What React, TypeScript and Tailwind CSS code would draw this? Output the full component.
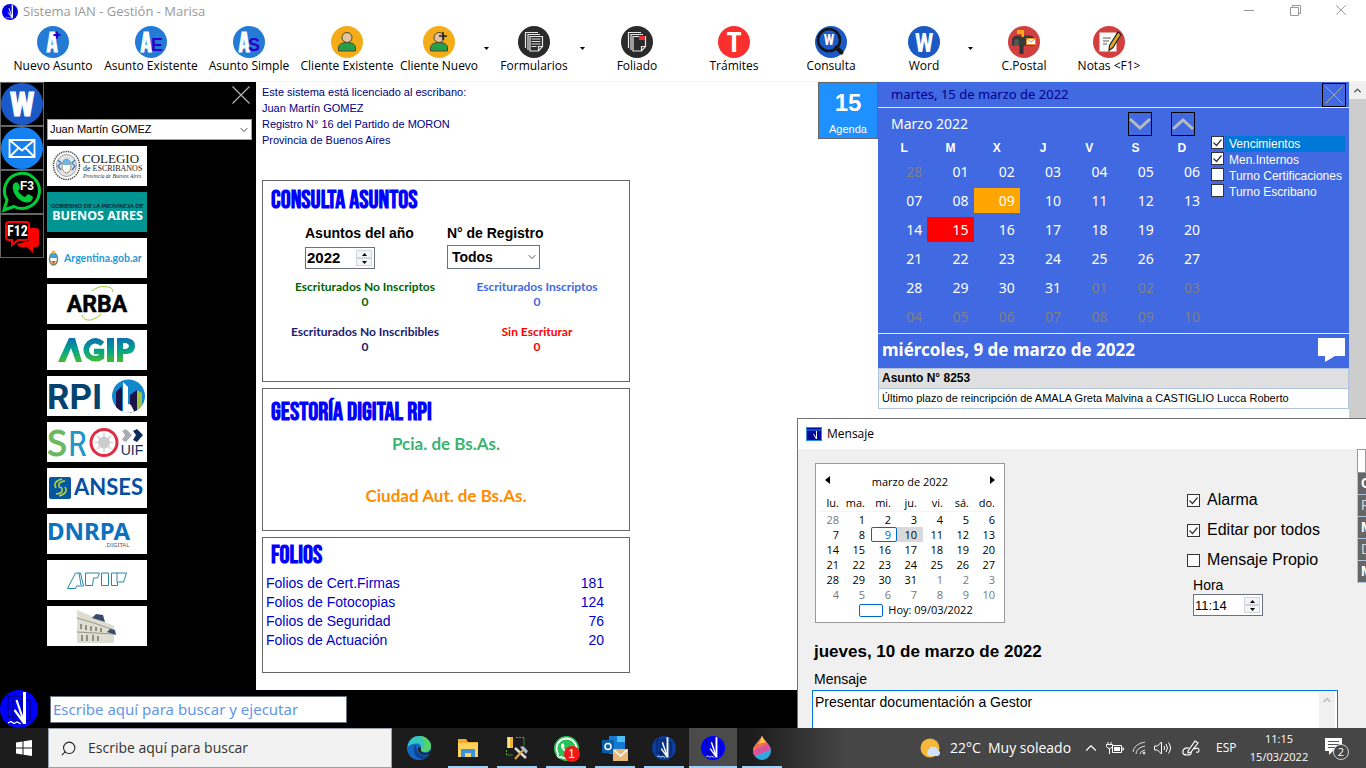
import type { ReactNode } from 'react';
import { ChevronDown, ChevronUp, Search, X } from 'lucide-react';
import { FaWhatsapp } from 'react-icons/fa';

const SEGOE = "font-['Open_Sans',sans-serif]";
const ARIAL = "font-['Liberation_Sans',Arial,sans-serif]";
const TAHOMA = "font-['Noto_Sans',Tahoma,sans-serif]";
const GOTHIC = "font-['Lato','Century_Gothic',sans-serif]";
const BEBAS = "font-['Bebas_Neue','Roboto_Condensed','Roboto',sans-serif]";

const condensed = "'Roboto Condensed','Open Sans Condensed','Roboto',sans-serif";
const bebas = "'Bebas Neue','Roboto Condensed','Roboto',sans-serif";
const sans = "'Liberation Sans',sans-serif";
const noto = "'Noto Sans',sans-serif";
const lato = 'Lato,sans-serif';

/* ---------- shared drawings ---------- */

function Disc({ color, children }: { color: string; children?: ReactNode }) {
  return (
    <svg width="32" height="32" viewBox="0 0 32 32" aria-hidden="true">
      <circle cx="16" cy="16" r="16" fill={color} />
      {children}
    </svg>
  );
}

function Letter({ x, y = 26, size = 28, fill = '#fff', font = bebas, children }: { x: number; y?: number; size?: number; fill?: string; font?: string; children: string }) {
  return (
    <text x={x} y={y} fontSize={size} fontWeight="700" fill={fill} textAnchor="middle" fontFamily={font}>
      {children}
    </text>
  );
}

function Person() {
  return (
    <g stroke="#4a4a33" strokeWidth="1">
      <path d="M7.500 25v-3c0-3.500 3-5.500 8.500-5.500s8.500 2 8.500 5.500v3z" fill="#24a148" />
      <circle cx="16" cy="11.500" r="5" fill="#e5c19c" />
    </g>
  );
}

function Sheets() {
  return (
    <g fill="none" stroke="#e8e8e8" strokeWidth="1.200">
      <path d="M7.500 22V6.500H20M10 24V8.500h12" />
      <path d="M12 10.500h12.500v10l-4 4.500H12z" fill="#2b2b2b" />
      <path d="M24.500 20.500h-4V25" />
    </g>
  );
}

function Boat({ size, color = '#00f' }: { size: number; color?: string }) {
  return (
    <svg width={size} height={size} viewBox="0 0 38 38" aria-hidden="true" className="shrink-0">
      <circle cx="19" cy="19" r="19" fill={color} />
      <path d="M8 6h14v21H8zM13 10h17v20H13z" fill="none" stroke="#000" strokeOpacity=".6" strokeWidth="1.200" />
      <path d="M24.500 2v32" stroke="#fff" strokeWidth="3" />
      <path d="M16.500 10l7.500 22M14.500 20l9.500 13" stroke="#fff" strokeWidth="2.200" />
      <path d="M8 33l3-1.500 3 2 3-1.500 4 2" fill="none" stroke="#fff" strokeWidth="1.300" />
    </svg>
  );
}

function BadgeW({ size }: { size: number }) {
  return (
    <svg width={size} height={size} viewBox="0 0 42 42" aria-hidden="true">
      <circle cx="21" cy="21" r="21" fill="#1b5ac6" />
      <text x="21" y="33" fontSize="33" fontWeight="700" fill="#fff" stroke="#fff" textAnchor="middle" fontFamily={condensed}>
        W
      </text>
    </svg>
  );
}

/* ---------- toolbar ---------- */

const tools: { label: string; width: string; icon: ReactNode; menu?: boolean }[] = [
  { label: 'Nuevo Asunto', width: 'w-[98px]', icon: <Disc color="#247bd6"><Letter x={15}>A</Letter><path d="M20 5.500v7M16.500 9h7" stroke="#2b00c8" strokeWidth="2" /></Disc> },
  { label: 'Asunto Existente', width: 'w-[98px]', icon: <Disc color="#247bd6"><Letter x={11}>A</Letter><Letter x={22} y={25} size={18} font={sans} fill="#2b00c8">E</Letter></Disc> },
  { label: 'Asunto Simple', width: 'w-[98px]', icon: <Disc color="#247bd6"><Letter x={11}>A</Letter><Letter x={21} y={25} size={18} font={sans} fill="#2b00c8">S</Letter></Disc> },
  { label: 'Cliente Existente', width: 'w-[98px]', icon: <Disc color="#f4ad18"><Person /></Disc> },
  { label: 'Cliente Nuevo', width: 'w-[86px]', menu: true, icon: <Disc color="#f4ad18"><Person /><path d="M20 6v8M16 10h8" stroke="#222" strokeWidth="1.600" /></Disc> },
  { label: 'Formularios', width: 'w-[88px]', menu: true, icon: <Disc color="#2b2b2b"><Sheets /><path d="M13.500 13h9M13.500 15.500h9M13.500 18h9M13.500 20.500h5" stroke="#ddd" strokeWidth="1" /></Disc> },
  { label: 'Foliado', width: 'w-[102px]', icon: <Disc color="#2b2b2b"><Sheets /><path d="M18 10h6v4h-6z" fill="#f03030" /></Disc> },
  { label: 'Trámites', width: 'w-[92px]', icon: <Disc color="#fc2f2f"><Letter x={16} font={condensed}>T</Letter></Disc> },
  {
    label: 'Consulta',
    width: 'w-[102px]',
    icon: (
      <Disc color="#1b5ac6">
        <Letter x={14} y={19} size={14} font={condensed}>W</Letter>
        <circle cx="14" cy="14" r="11" fill="none" stroke="#161616" strokeWidth="2.600" />
        <path d="M21.500 21.500l5 5" stroke="#161616" strokeWidth="4" strokeLinecap="round" />
      </Disc>
    ),
  },
  { label: 'Word', width: 'w-[84px]', menu: true, icon: <Disc color="#1b5ac6"><Letter x={16} size={25} font={condensed}>W</Letter></Disc> },
  {
    label: 'C.Postal',
    width: 'w-[100px]',
    icon: (
      <Disc color="#d23f3f">
        <path d="M11.500 18h4v10h-4z" fill="#333" />
        <path d="M4 20v-5q0-5.500 6-5.500h11q5 0 6 5v5H4z" fill="#3a3a3a" />
        <path d="M6 20v-4q0-3 2.500-3t2.500 3v4z" fill="#555" />
        <path d="M9 4h7v7h-2.500V8H9z" fill="#f9a81a" />
        <path d="M18.500 12.500h9v6h-9z" fill="#fff" stroke="#f58a1f" />
        <path d="M19 13l4 3 4-3" fill="none" stroke="#f58a1f" />
      </Disc>
    ),
  },
  {
    label: 'Notas <F1>',
    width: 'w-[70px]',
    icon: (
      <Disc color="#d23f3f">
        <path d="M6.500 6.500h17v19h-17z" fill="#fff" />
        <path d="M10 12h8M10 15h6M10 18h4" stroke="#555" />
        <path d="M25 6l3 2.500-8 13-4 3 .5-5z" fill="#e0a820" stroke="#222" strokeWidth="1.200" />
      </Disc>
    ),
  },
];

function Toolbar() {
  return (
    <nav className="flex h-[58px] shrink-0 border-b border-gray-100 bg-white pl-1" aria-label="Herramientas">
      {tools.map((t) => (
        <div key={t.label} className="flex">
          <button className={`${t.width} flex flex-col items-center pt-0.5 text-xs leading-4 whitespace-nowrap text-black ${SEGOE}`}>
            {t.icon}
            {t.label}
          </button>
          {t.menu && (
            <button className="flex w-2 items-center justify-center" aria-label={`Más opciones de ${t.label}`}>
              <svg width="5" height="3" viewBox="0 0 5 3" className="mb-2"><path d="M0 0h5L2.500 3z" /></svg>
            </button>
          )}
        </div>
      ))}
    </nav>
  );
}

function TitleBar() {
  return (
    <header className="flex h-6 shrink-0 items-center bg-white pr-0.5 pl-0.5">
      <Boat size={16} />
      <h1 className={`ml-[5px] flex-1 text-[13px] text-[#999] ${SEGOE}`}>Sistema IAN - Gestión - Marisa</h1>
      <div className="flex pb-1">
        <button className="flex h-5 w-[46px] items-center justify-center" aria-label="Minimizar">
          <svg width="10" height="10" fill="none" stroke="#999"><path d="M0 5.500h10" /></svg>
        </button>
        <button className="flex h-5 w-[46px] items-center justify-center" aria-label="Restaurar">
          <svg width="11" height="11" fill="none" stroke="#999"><path d="M.5 2.500h8v8h-8zM2.500 2.500v-2h8v8h-2" /></svg>
        </button>
        <button className="flex h-5 w-[46px] items-center justify-center" aria-label="Cerrar">
          <X size={18} color="#999" strokeWidth={1.25} />
        </button>
      </div>
    </header>
  );
}

/* ---------- left side ---------- */

function Shortcuts() {
  const cell = 'flex h-11 w-11 items-center justify-center border border-[#666] bg-black';
  return (
    <div className="flex w-11 shrink-0 flex-col">
      <button className={cell} aria-label="Word"><BadgeW size={42} /></button>
      <button className={cell} aria-label="Correo">
        <svg width="42" height="42" viewBox="0 0 42 42">
          <circle cx="21" cy="21" r="21" fill="#1581f0" />
          <path d="M8.500 13h25v17h-25zM8.500 13L21 23.500 33.500 13M8.500 30l9-9M33.500 30l-9-9" fill="none" stroke="#fff" strokeWidth="1.800" />
        </svg>
      </button>
      <button className={cell} aria-label="WhatsApp F3">
        <svg width="42" height="42" viewBox="0 0 42 42">
          <path d="M3 39l3-10A17.500 17.500 0 1 1 13 35.500z" fill="none" stroke="#00cc38" strokeWidth="3" />
          <path d="M12 14c2-4 5-3 6 0l1 3-2 3c2 3 4 5 7 6l3-3 4 2c2 1 0 5-2 6-9 3-19-9-17-17z" fill="#00cc38" />
          <path d="M19 8h14v12H19z" fill="#000" />
          <text x="26" y="19" fontSize="12" fontWeight="700" fill="#fff" textAnchor="middle" fontFamily={sans}>F3</text>
        </svg>
      </button>
      <button className={cell} aria-label="Mensajes F12">
        <svg width="42" height="42" viewBox="0 0 42 42">
          <path d="M29 13h6q3 0 3 3v13q0 3-3 3h-3v6l-6-6H19q-2 0-3-3l8-2q5 0 5-5z" fill="#f00" />
          <path d="M7 7h18q3 0 3 3v12q0 3-3 3H17l-6 5v-5H8q-3 0-3-3V10q0-3 3-3z" fill="#000" stroke="#f00" strokeWidth="2" />
          <text x="16.500" y="21" fontSize="14" fontWeight="700" fill="#fff" textAnchor="middle" fontFamily={condensed}>F12</text>
        </svg>
      </button>
    </div>
  );
}

const sites: { name: string; art: ReactNode }[] = [
  {
    name: 'Colegio de Escribanos',
    art: (
      <>
        <ellipse cx="19.500" cy="19.500" rx="13" ry="14" fill="#fff" stroke="#555" strokeWidth="1.500" strokeDasharray="1.500 .8" />
        <ellipse cx="19.500" cy="19.500" rx="10" ry="11" fill="#dfe6ee" stroke="#777" strokeWidth=".7" />
        <ellipse cx="19.500" cy="20" rx="4.500" ry="7" fill="#fff" stroke="#a58b4d" />
        <path d="M15.500 19h8v-4q-4-4-8 0z" fill="#6fb3e0" />
        <path d="M11 14l3 3-3 3 3 4M28 14l-3 3 3 3-3 4" fill="none" stroke="#4b7fb5" strokeWidth="1.500" />
        <text x="35" y="17" fontSize="13" fill="#222" fontFamily="'Liberation Serif',serif">COLEGIO</text>
        <text x="36" y="25" fontSize="8" fill="#222" fontFamily="'Liberation Serif',serif">de ESCRIBANOS</text>
        <text x="36" y="32" fontSize="5.500" fill="#333" fontStyle="italic" fontFamily="'Liberation Serif',serif">Provincia de Buenos Aires</text>
      </>
    ),
  },
  {
    name: 'Provincia de Buenos Aires',
    art: (
      <>
        <rect width="100" height="40" fill="#009493" />
        <text x="50" y="15.500" fontSize="6" fill="#0c2a35" stroke="#0c2a35" strokeWidth=".2" textAnchor="middle" fontFamily={lato}>GOBIERNO DE LA PROVINCIA DE</text>
        <text x="50.500" y="28" fontSize="12.500" fontWeight="700" fill="#fff" textAnchor="middle" fontFamily={noto}>BUENOS AIRES</text>
      </>
    ),
  },
  {
    name: 'Argentina.gob.ar',
    art: (
      <>
        <ellipse cx="6.500" cy="21" rx="4" ry="6" fill="#fff" stroke="#7c8a55" strokeWidth="1.500" />
        <path d="M3 20q0-5 3.500-5t3.500 5z" fill="#3fa0dc" />
        <circle cx="6.500" cy="14" r="1.800" fill="#f0b93a" />
        <path d="M4 23h5l-2.500 4z" fill="#c56a4a" />
        <text x="17" y="24" fontSize="10.500" fontWeight="700" fill="#1f9bd7" fontFamily={lato}>Argentina.gob.ar</text>
      </>
    ),
  },
  {
    name: 'ARBA',
    art: (
      <>
        <text x="50" y="28" fontSize="23" fontWeight="700" stroke="#000" strokeWidth=".5" textAnchor="middle" fontFamily="Roboto,sans-serif">ARBA</text>
        <path d="M45 7q7-6 16-4 5 1 5 5M35 31q2 6 9 5 7-2 10-6" fill="none" stroke="#a4c93a" strokeWidth="1" />
      </>
    ),
  },
  {
    name: 'AGIP',
    art: (
      <>
        <defs>
          <linearGradient id="agip" gradientUnits="userSpaceOnUse" x1="0" y1="8" x2="0" y2="32">
            <stop offset="0" stopColor="#0b6fb0" />
            <stop offset=".5" stopColor="#00a38c" />
            <stop offset="1" stopColor="#45bb2f" />
          </linearGradient>
        </defs>
        <path d="M11 32L22 8h6l7 24h-6l-5-14-6 14z" fill="url(#agip)" />
        <path d="M55.500 14q-7-6-13-1-6 6-1 13 6 5 13 1v-5.500H47" fill="none" stroke="url(#agip)" strokeWidth="5.500" />
        <path d="M60 8h7v24h-7zM70 8h10q8 1 8 8t-8 8h-4v8h-6zm6 5v6h3q3-1 3-3t-3-3z" fill="url(#agip)" fillRule="evenodd" />
      </>
    ),
  },
  {
    name: 'RPI',
    art: (
      <>
        <text x="0" y="33" fontSize="35" fontWeight="700" fill="#04426f" fontFamily="Roboto,sans-serif">RPI</text>
        <defs><clipPath id="rpi"><circle cx="81.500" cy="20" r="16.500" /></clipPath></defs>
        <g clipPath="url(#rpi)">
          <rect x="65" y="3" width="34" height="34" fill="#1187cf" />
          <path d="M69 16l6-6v28h-6z" fill="#1c1448" />
          <path d="M76 6l5 5v26h-5z" fill="#fff" />
          <path d="M83 19l7-5v23h-7z" fill="#1c1448" />
          <path d="M90 14l5 3v19h-5z" fill="#9bc53b" />
          <path d="M75 37q3-12 9-8l4 8z" fill="#fff" />
        </g>
      </>
    ),
  },
  {
    name: 'SRO UIF',
    art: (
      <>
        <text x="0" y="34" fontSize="37" fill="#6db75f" stroke="#6db75f" fontFamily={lato}>S</text>
        <text x="21" y="34" fontSize="35" fill="#2097c9" fontFamily={condensed}>R</text>
        <circle cx="57" cy="20.500" r="13" fill="none" stroke="#e02c43" strokeWidth="3" />
        <circle cx="57" cy="20.500" r="6" fill="#ccc" />
        <path d="M57 11v19M47.500 20.500h19M50 14l14 13M64 14L50 27" stroke="#ccc" strokeWidth="1.200" />
        <path d="M75 9l4-2 6 6-6 7-4-2 3-5z" fill="#a9adb1" />
        <path d="M86 9l4-2 6 6-6 7-4-2 3-5z" fill="#0d2d5c" />
        <text x="85" y="33" fontSize="14" fill="#0d2d5c" textAnchor="middle" fontFamily={sans}>UIF</text>
      </>
    ),
  },
  {
    name: 'ANSES',
    art: (
      <>
        <rect x="2" y="9" width="22" height="22" rx="2" fill="#0557a0" />
        <path d="M15 11q-10 3-6 9M18 13q-9 1-5 7M12 28q10-3 6-9M9 26q9-1 5-7" fill="none" stroke="#b5d334" strokeWidth="1.500" />
        <text x="27" y="27" fontSize="22" fontWeight="700" fill="#0550a0" fontFamily={lato}>ANSES</text>
      </>
    ),
  },
  {
    name: 'DNRPA Digital',
    art: (
      <>
        <text x="0" y="26" fontSize="24" fontWeight="700" fill="#0a73bf" fontFamily={noto}>DNRPA</text>
        <text x="58" y="33" fontSize="6" fill="#555" fontFamily={noto}>.DIGITAL</text>
      </>
    ),
  },
  {
    name: 'AFIP',
    art: (
      <g fill="none" stroke="#2b86ad" strokeWidth="1">
        <path d="M20.500 28.500l8-15.500h5l3 13h-7l-1 2.500zM32 13l2 12" />
        <path d="M38.500 25.500V13h14l-2 5h-4l-1 7.500zM54.500 13h7v12.500h-7zM64.500 25.500V13h15l-3 9h-6v3.500zM70 13v9" />
      </g>
    ),
  },
  {
    name: 'Registro',
    art: (
      <>
        <path d="M30 4l17 7 20 9v17H30z" fill="#deded0" />
        <path d="M30 12l17 5 20 7M30 26l37 2" stroke="#99998a" fill="none" />
        <path d="M45 12l4-4 7 1 2 7zM60 26l3-3 5 1 1 5z" fill="#3b4b70" />
        <path d="M34 18v5M39 19v5M44 20v5M49 21v4M54 22v4M35 29v6M40 29v6M46 29v6M51 30v5" stroke="#75756a" strokeWidth="1.500" />
      </>
    ),
  },
];

function Sidebar() {
  return (
    <aside className={`flex w-[212px] shrink-0 flex-col bg-black pt-1 pr-1 pl-[3px] ${ARIAL}`}>
      <button className="h-[18px] self-end pr-0.5" aria-label="Cerrar panel">
        <svg width="18" height="18" stroke="#b5b5b5" strokeWidth="1.200"><path d="M.5 .5l17 17M17.500 .5l-17 17" /></svg>
      </button>
      <div className="relative mt-[15px] h-[21px]">
        <select className="block h-[21px] w-full appearance-none border border-gray-400 bg-white pl-0.5 text-[11px] text-black" aria-label="Escribano">
          <option>Juan Martín GOMEZ</option>
        </select>
        <ChevronDown size={12} color="#444" strokeWidth={2} className="pointer-events-none absolute top-[5px] right-0.5" />
      </div>
      <ul className="mt-1.5 flex flex-col gap-1.5">
        {sites.map((s) => (
          <li key={s.name} className="h-10">
            <a href="#" aria-label={s.name} className="block h-10 w-[100px] bg-white">
              <svg width="100" height="40" viewBox="0 0 100 40" className="overflow-visible">{s.art}</svg>
            </a>
          </li>
        ))}
      </ul>
    </aside>
  );
}

/* ---------- panels ---------- */

function Spinner({ id, value, bold }: { id: string; value: string; bold?: boolean }) {
  const step = 'flex h-2 w-4 items-center justify-center border border-gray-300 bg-gray-100';
  return (
    <div className="flex h-[22px] w-[70px] items-center justify-between border border-gray-500 bg-white pr-0.5">
      <input id={id} defaultValue={value} className={`h-5 w-12 pl-px text-black outline-none ${bold ? 'text-[15px] font-bold' : 'text-[13px]'}`} />
      <div className="flex flex-col">
        <button className={step} aria-label="Aumentar"><svg width="5" height="3"><path d="M0 3h5L2.500 0z" /></svg></button>
        <button className={step} aria-label="Disminuir"><svg width="5" height="3"><path d="M0 0h5L2.500 3z" /></svg></button>
      </div>
    </div>
  );
}

function Heading({ children }: { children: string }) {
  return <h2 className={`text-[25px] leading-6 font-bold text-[#00f] ${BEBAS}`}>{children}</h2>;
}

const stats = [
  { label: 'Escriturados No Inscriptos', color: 'text-[#006400]' },
  { label: 'Escriturados Inscriptos', color: 'text-[#4169e1]' },
  { label: 'Escriturados No Inscribibles', color: 'text-[#191970]' },
  { label: 'Sin Escriturar', color: 'text-[#f00]' },
];

const folios = [
  ['Folios de Cert.Firmas', 181],
  ['Folios de Fotocopias', 124],
  ['Folios de Seguridad', 76],
  ['Folios de Actuación', 20],
];

function Panels() {
  const box = 'w-[368px] border border-[#666] bg-white';
  return (
    <section className={`flex flex-1 flex-col gap-1.5 pt-0.5 pl-1.5 ${ARIAL}`}>
      <p className="mb-[26px] text-[11px] leading-4 text-[#000080]">
        Este sistema está licenciado al escribano:<br />
        Juan Martín GOMEZ<br />
        Registro N° 16 del Partido de MORON<br />
        Provincia de Buenos Aires
      </p>

      <div className={`${box} h-[202px] pt-2`}>
        <div className="pl-2"><Heading>CONSULTA ASUNTOS</Heading></div>
        <div className="mt-2.5 flex gap-[33px] pl-[42px] text-sm leading-5 font-bold text-black">
          <div>
            <label htmlFor="anio">Asuntos del año</label>
            <div className="mt-1"><Spinner id="anio" value="2022" bold /></div>
          </div>
          <div>
            <label htmlFor="registro">N° de Registro</label>
            <div className="relative mt-0.5 w-[93px]">
              <select id="registro" className="h-6 w-full appearance-none border border-gray-500 bg-white pl-1 leading-5">
                <option>Todos</option>
              </select>
              <ChevronDown size={12} color="#555" className="pointer-events-none absolute top-1.5 right-0.5" />
            </div>
          </div>
        </div>
        <dl className={`mt-2.5 ml-4 grid w-[344px] grid-cols-2 gap-y-[15px] text-center text-xs leading-[15px] font-bold ${GOTHIC}`}>
          {stats.map((s) => (
            <div key={s.label} className={s.color}>
              <dt>{s.label}</dt>
              <dd>0</dd>
            </div>
          ))}
        </dl>
      </div>

      <div className={`${box} h-[143px] pt-3`}>
        <div className="pl-2"><Heading>GESTORÍA DIGITAL RPI</Heading></div>
        <div className={`mt-[9px] flex flex-col items-center gap-8 text-[17px] leading-5 font-bold ${GOTHIC}`}>
          <a href="#" className="text-[#3cb371]">Pcia. de Bs.As.</a>
          <a href="#" className="text-[#ff8c00]">Ciudad Aut. de Bs.As.</a>
        </div>
      </div>

      <div className={`${box} h-[136px] pt-1.5`}>
        <div className="pl-2"><Heading>FOLIOS</Heading></div>
        <table className="mt-1.5 w-[341px] text-sm leading-[19px] text-[#0000cd]">
          <tbody>
            {folios.map(([name, count]) => (
              <tr key={name}>
                <td className="pl-[3px]">{name}</td>
                <td className="text-right">{count}</td>
              </tr>
            ))}
          </tbody>
        </table>
      </div>
    </section>
  );
}

function Tick({ id, checked }: { id: string; checked?: boolean }) {
  return (
    <span className="grid size-[13px] shrink-0">
      <input id={id} type="checkbox" defaultChecked={checked} className="peer col-start-1 row-start-1 size-[13px] appearance-none border border-[#333] bg-white" />
      <svg viewBox="0 0 13 13" className="pointer-events-none invisible col-start-1 row-start-1 peer-checked:visible">
        <path d="M2.500 6.500l3 3 5-6" fill="none" stroke="#333" strokeWidth="1.200" />
      </svg>
    </span>
  );
}

/* ---------- agenda ---------- */

const days = [28, ...Array.from({ length: 31 }, (_, i) => i + 1), ...Array.from({ length: 10 }, (_, i) => i + 1)];
const isOther = (i: number) => i === 0 || i > 31;
const weeks = Array.from({ length: 6 }, (_, w) => days.slice(w * 7, w * 7 + 7));

function dayStyle(i: number) {
  if (i === 9) return 'bg-[#ffa500] text-white';
  if (i === 15) return 'bg-[#f00] text-white';
  return isOther(i) ? 'text-[#808080]' : 'text-white';
}

const filters = [
  { label: 'Vencimientos', checked: true },
  { label: 'Men.Internos', checked: true },
  { label: 'Turno Certificaciones' },
  { label: 'Turno Escribano' },
];

function Agenda() {
  return (
    <section className="flex items-start">
      <button className={`flex h-[57px] w-[60px] flex-col items-center border border-[#666] bg-[#1e90ff] pt-1.5 text-white ${ARIAL}`}>
        <span className="text-2xl leading-7 font-bold">15</span>
        <span className="pt-0.5 text-[11px] leading-5">Agenda</span>
      </button>
      <div className="w-[471px] bg-[#4169e1]">
        <div className="flex h-[26px] items-center justify-between border-b border-blue-100 pr-[3px] pl-[13px]">
          <span className={`text-[13px] text-[#00008b] ${TAHOMA}`}>martes, 15 de marzo de 2022</span>
          <button className="flex size-6 items-center justify-center border border-black" aria-label="Cerrar agenda">
            <svg width="18" height="18" stroke="#aaa"><path d="M.5 .5l17 17M17.500 .5l-17 17" /></svg>
          </button>
        </div>
        <div className="flex h-[225px]">
          <div className="ml-[3px] w-[324px] shrink-0 pt-1">
            <div className={`flex h-6 items-center pr-2.5 pl-2.5 text-sm text-white ${TAHOMA}`}>
              <span className="flex-1">Marzo 2022</span>
              <button className="flex size-6 items-center justify-center border border-black" aria-label="Mes siguiente">
                <svg width="22" height="14" viewBox="0 0 22 14" fill="none" stroke="#bbb" strokeWidth="3"><path d="M1 2l10 9 10-9" /></svg>
              </button>
              <button className="ml-[19px] flex size-6 items-center justify-center border border-black" aria-label="Mes anterior">
                <svg width="22" height="14" viewBox="0 0 22 14" fill="none" stroke="#bbb" strokeWidth="3"><path d="M1 12l10-9 10 9" /></svg>
              </button>
            </div>
            <table className="w-full table-fixed border-collapse text-white">
              <thead>
                <tr className={`h-[21px] text-xs font-bold ${ARIAL}`}>
                  {['L', 'M', 'X', 'J', 'V', 'S', 'D'].map((d) => <th key={d} scope="col" className="p-0 pt-0.5">{d}</th>)}
                </tr>
              </thead>
              <tbody className={`text-sm ${TAHOMA}`}>
                {weeks.map((week, w) => (
                  <tr key={w} className="h-[29px]">
                    {week.map((d, c) => (
                      <td key={c} className="p-0">
                        <div className={`h-[25px] pr-[5px] text-right leading-[25px] ${dayStyle(w * 7 + c)}`}>{String(d).padStart(2, '0')}</div>
                      </td>
                    ))}
                  </tr>
                ))}
              </tbody>
            </table>
          </div>
          <div className={`mr-1 ml-1.5 flex flex-1 flex-col pt-7 text-xs leading-[17px] text-white ${ARIAL}`}>
            {filters.map((f, i) => (
              <div key={f.label} className="flex h-4 gap-px">
                <Tick id={`filtro-${i}`} checked={f.checked} />
                <label htmlFor={`filtro-${i}`} className={`flex-1 pl-1 whitespace-nowrap ${i === 0 ? 'bg-[#0078d7]' : ''}`}>{f.label}</label>
              </div>
            ))}
          </div>
        </div>
        <div className="flex h-[35px] items-center justify-between border-t border-blue-100 pr-1 pb-0.5 pl-1">
          <h2 className={`text-[17px] font-bold text-white ${TAHOMA}`}>miércoles, 9 de marzo de 2022</h2>
          <button aria-label="Mensajes">
            <svg width="27" height="24" fill="#fff"><path d="M0 0h27v18H17L7 24v-6H0z" /></svg>
          </button>
        </div>
        <div className={`border border-[#b0c4de] text-xs leading-[19px] whitespace-nowrap text-black ${ARIAL}`}>
          <h3 className="border-b border-[#b0c4de] bg-[#e0e0e0] pl-[3px] font-bold">Asunto N° 8253</h3>
          <p className="bg-white pl-[3px] text-[11px] leading-[19px]">Último plazo de reincripción de AMALA Greta Malvina a CASTIGLIO Lucca Roberto</p>
        </div>
      </div>
    </section>
  );
}

/* ---------- message window ---------- */

function MonthPicker() {
  return (
    <div className={`h-40 w-[190px] border border-[#999] bg-white px-[3px] pt-2 text-[11px] text-black ${SEGOE}`}>
      <div className="flex h-5 items-center justify-between px-1.5">
        <button className="pb-1" aria-label="Mes anterior"><svg width="5" height="8"><path d="M5 0v8L0 4z" /></svg></button>
        <span>marzo de 2022</span>
        <button className="pb-1" aria-label="Mes siguiente"><svg width="5" height="8"><path d="M0 0v8l5-4z" /></svg></button>
      </div>
      <table className="mt-[3px] w-full table-fixed border-collapse text-right leading-[15px]">
        <thead>
          <tr className="h-4">
            {['lu.', 'ma.', 'mi.', 'ju.', 'vi.', 'sá.', 'do.'].map((d) => <th key={d} scope="col" className="p-0 pr-1.5 font-normal">{d}</th>)}
          </tr>
        </thead>
        <tbody className="border-t border-gray-100">
          {weeks.map((week, w) => (
            <tr key={w} className="h-[15px]">
              {week.map((d, c) => {
                const i = w * 7 + c;
                return (
                  <td key={c} className="p-0">
                    <div className={`h-[15px] pr-1.5 ${i === 9 ? 'rounded-xs text-[#0066cc] ring-1 ring-[#0066cc] ring-inset' : i === 10 ? 'bg-[#d9d9d9]' : isOther(i) ? 'text-[#777]' : ''}`}>{d}</div>
                  </td>
                );
              })}
            </tr>
          ))}
        </tbody>
      </table>
      <div className="flex h-[18px] items-center justify-center gap-[5px] pl-3">
        <span className="h-[13px] w-6 rounded-xs border border-[#0066cc]" />
        Hoy: 09/03/2022
      </div>
    </div>
  );
}

const options = [
  { label: 'Alarma', checked: true },
  { label: 'Editar por todos', checked: true },
  { label: 'Mensaje Propio' },
];

const recipients = ['C', 'P', 'M', 'D', 'M'];

function MessageWindow() {
  return (
    <section className={`absolute right-0 bottom-10 flex h-[310px] w-[569px] flex-col overflow-hidden border-t border-l border-[#707070] bg-[#f0f0f0] text-black ${ARIAL}`} aria-label="Mensaje">
      <div className="flex h-[30px] shrink-0 items-center gap-[5px] bg-white pl-2">
        <svg width="16" height="14">
          <rect width="16" height="14" fill="#000a9c" stroke="#2b8be0" strokeWidth="2" />
          <path d="M0 3h16" stroke="#2b8be0" />
          <path d="M10.500 4v8M7.500 7l3 5" stroke="#fff" />
        </svg>
        <span className={`text-xs ${SEGOE}`}>Mensaje</span>
      </div>
      <div className="flex h-[241px] shrink-0 justify-between">
        <div className="flex flex-1 justify-between pl-4">
          <div className="pt-3.5">
            <div className="pl-px"><MonthPicker /></div>
            <p className="mt-[18px] text-[17px] leading-[22px] font-bold">jueves, 10 de marzo de 2022</p>
            <label htmlFor="mensaje" className="mt-1.5 block h-5 text-sm leading-5">Mensaje</label>
          </div>
          <div className="mr-[37px] flex flex-col pt-9">
            {options.map((o, i) => (
              <div key={o.label} className="flex h-[30px] items-center gap-[7px]">
                <Tick id={`opcion-${i}`} checked={o.checked} />
                <label htmlFor={`opcion-${i}`} className="text-base">{o.label}</label>
              </div>
            ))}
            <label htmlFor="hora" className="ml-1.5 pt-0.5 text-sm leading-[17px]">Hora</label>
            <div className="ml-1.5"><Spinner id="hora" value="11:14" /></div>
          </div>
        </div>
        <ul className="w-[9px] overflow-hidden text-sm leading-[21px] text-white">
          <li className="h-6 border border-[#999] bg-white" />
          {recipients.map((r, i) => (
            <li key={i} className={`h-[22px] overflow-hidden border-b border-l border-[#b0c4de] bg-[#666] pl-[3px] ${i % 2 ? 'text-gray-300' : 'font-bold'}`}>{r}</li>
          ))}
        </ul>
      </div>
      <div className="mr-7 ml-3.5 flex h-[60px] shrink-0 border border-[#0078d7] bg-white p-0.5 pt-px">
        <textarea id="mensaje" defaultValue="Presentar documentación a Gestor" className="flex-1 resize-none text-sm leading-5 outline-none" />
        <span className="flex w-4 justify-center bg-[#f0f0f0] pt-0.5"><ChevronUp size={12} color="#bbb" strokeWidth={3} /></span>
      </div>
    </section>
  );
}

/* ---------- task bar ---------- */

const apps: { name: string; icon: ReactNode; active?: boolean; idle?: boolean }[] = [
  {
    name: 'Edge',
    idle: true,
    icon: (
      <svg width="24" height="24" viewBox="0 0 24 24">
        <circle cx="12" cy="12" r="12" fill="#1468c4" />
        <path d="M.5 11C2 3 7 0 12 0c7 0 12 5 12 10 0 4-3 6-6 6-4 0-5-2-4-4 1-4-6-7-13.500-1z" fill="#36c6c0" />
        <path d="M12 0c7 0 12 5 12 10 0 4-3 6-6 6-3 0-4-1-4-3 4 0 6-8-2-13z" fill="#53d36a" />
        <path d="M9 9c-4 3-3 12 5 14 4 0 7-2 9-5-7 4-14 0-14-9z" fill="#0c4392" />
        <path d="M14 12c-1 3 1 5 5 5 2 0 4-1 5-3l-1 4c-5 2-12 0-12-5 0-2 2-3 3-1z" fill="#222" />
      </svg>
    ),
  },
  {
    name: 'Explorador',
    icon: (
      <svg width="22" height="18" viewBox="0 0 22 18">
        <path d="M1 0h8l2 3h10v4H1z" fill="#f2a92c" />
        <path d="M1 4h20v14H1z" fill="#fbd35f" />
        <path d="M4 18v-8h14v8h-4v-4H8v4z" fill="#3e93d8" />
      </svg>
    ),
  },
  {
    name: 'Configuración',
    icon: (
      <svg width="24" height="24" viewBox="0 0 24 24">
        <path d="M2 1h6v11H2z" fill="#f5b530" />
        <path d="M3 1h2v11H3z" fill="#ffe58f" />
        <path d="M11 1.500h8v8M1.500 14v5h7" fill="none" stroke="#4eae42" strokeDasharray="2 1" />
        <path d="M10 12l11 10" stroke="#ddd" strokeWidth="2.500" />
        <path d="M20 12L10 23" stroke="#e0a850" strokeWidth="2" />
        <path d="M15 11l3-1 5 5-2 3z" fill="#aab8c8" />
      </svg>
    ),
  },
  {
    name: 'WhatsApp',
    icon: (
      <span className="relative">
        <FaWhatsapp size={25} color="#fff" className="rounded-full bg-[#25c454]" />
        <span className={`absolute top-2.5 left-2.5 flex size-4 items-center justify-center rounded-full bg-[#f21818] text-xs text-white ${ARIAL}`}>1</span>
      </span>
    ),
  },
  {
    name: 'Outlook',
    icon: (
      <svg width="26" height="26" viewBox="0 0 26 26">
        <path d="M7 1h16v18H7z" fill="#1479cf" />
        <path d="M15 1h8v6h-8z" fill="#4fc0f5" />
        <path d="M0 5h12v13H0z" fill="#0a5ea8" />
        <circle cx="6" cy="11.500" r="3" fill="none" stroke="#fff" strokeWidth="1.500" />
        <path d="M11 14h15v12H11z" fill="#e8b877" />
        <path d="M12 15l6.500 6 6.500-6" fill="none" stroke="#fff" strokeWidth="1.500" />
      </svg>
    ),
  },
  { name: 'IAN', icon: <Boat size={24} color="#0a3d9c" /> },
  { name: 'IAN Gestión', active: true, icon: <Boat size={24} /> },
  {
    name: 'Paint 3D',
    icon: (
      <svg width="20" height="24" viewBox="0 0 20 24">
        <path d="M10 0c2 5 9 9 9 15a9 9 0 0 1-18 0C1 9 8 5 10 0z" fill="#2fa9e0" />
        <path d="M10 0c2 5 9 9 9 14-4 1-11 4-16 6-2-2-2-4-2-5C1 9 8 5 10 0z" fill="#d8549a" />
        <path d="M10 0c1 3 4 6 6 8-4 1-9 3-15 7C1 9 8 5 10 0z" fill="#f06f4e" />
        <path d="M10 0c1 2 2 4 4 6l-8 2c2-2 3-5 4-8z" fill="#ffc93c" />
      </svg>
    ),
  },
];

function Taskbar() {
  return (
    <footer className={`flex h-10 shrink-0 items-center bg-[linear-gradient(90deg,#1c1c1c_55%,#464646_62%)] text-sm text-white ${SEGOE}`}>
      <button className="flex h-10 w-12 items-center justify-center" aria-label="Inicio">
        <svg width="16" height="16" fill="#fff"><path d="M0 2.500L6.500 1.500v6H0zM7.500 1.300L16 0v7.500H7.500zM0 8.500h6.500v6L0 13.500zM7.500 8.500H16V16l-8.500-1.300z" /></svg>
      </button>
      <div className="mr-[3px] flex h-10 w-[344px] items-center gap-[11px] border border-gray-400 bg-[#f2f2f2] pl-[11px]">
        <Search size={17} color="#222" strokeWidth={1.5} className="-scale-x-100" />
        <input aria-label="Buscar" placeholder="Escribe aquí para buscar" className="flex-1 text-sm outline-none placeholder:text-[#333]" />
      </div>
      <div className="flex gap-px">
        {apps.map((a) => (
          <button key={a.name} aria-label={a.name} className={`relative flex h-10 w-12 items-center justify-center ${a.active ? 'bg-[#4b4b4b]' : ''}`}>
            {a.icon}
            {!a.idle && <span className={`absolute bottom-0 h-0.5 bg-[#9fd0f7] ${a.active ? 'inset-x-0' : 'inset-x-1'}`} />}
          </button>
        ))}
      </div>
      <div className="ml-auto flex items-center pr-[17px]">
        <svg width="22" height="20" viewBox="0 0 22 20">
          <circle cx="10" cy="10" r="9.500" fill="#f7b63c" />
          <path d="M9 18a4 4 0 0 1 0-7 5 5 0 0 1 9 1 3.200 3.200 0 0 1 0 6z" fill="#cfe2f7" />
        </svg>
        <span className="ml-2 w-[38px]">22°C</span>
        <span className="w-[94px] whitespace-nowrap">Muy soleado</span>
        <button className="w-6" aria-label="Iconos ocultos"><ChevronUp size={18} strokeWidth={1.5} /></button>
        <svg width="18" height="14" fill="none" stroke="#fff"><path d="M6.500 4.500h9v7h-9zM16 7h1.500v2H16M2 1v2M5 1v2M.5 3.500h6v2q-1 2-3 2t-3-2zM3.500 8v5" /><path d="M8 6h6v4H8z" fill="#fff" stroke="none" /></svg>
        <svg width="14" height="14" fill="none" stroke="#ddd" className="ml-2"><path d="M1 11Q2 3 13 1M4 13q0-6 9-8M8 13q0-3 5-4" /><circle cx="12" cy="12" r="1" fill="#fff" /></svg>
        <svg width="18" height="14" fill="none" stroke="#fff" className="ml-2"><path d="M.5 5h3l4-4v12l-4-4h-3zM10 5q1.500 2 0 4M12 3q3 4 0 8M14.500 1.500q4 5.500 0 11" /></svg>
        <svg width="18" height="18" fill="none" stroke="#fff" strokeWidth="1.200" className="ml-2.5"><path d="M6 12L13 2l3 2-7 9-3 1zM7 9q-5-1-6 3t4 4 4-3M12 10q5-2 5 1t-3 2" /></svg>
        <span className="ml-4 w-[33px] text-xs">ESP</span>
        <div className="w-[60px] text-center text-[11px] leading-[18px]">11:15<br />15/03/2022</div>
        <button className="relative ml-4 size-6" aria-label="Notificaciones">
          <svg width="17" height="17" className="absolute top-0.5 left-0" fill="#fff"><path d="M0 0h17v13H8l-4 4v-4H0z" /><path d="M3 3.500h11M3 6.500h11M3 9.500h7" stroke="#555" /></svg>
          <span className="absolute top-2 left-2 flex size-4 items-center justify-center rounded-full border border-gray-300 bg-[#464646] text-[11px]">2</span>
        </button>
      </div>
    </footer>
  );
}

export default function App() {
  return (
    <div className="relative flex h-screen flex-col overflow-hidden bg-white">
      <TitleBar />
      <Toolbar />
      <main className="flex min-h-0 flex-1">
        <div className="flex bg-black">
          <Shortcuts />
          <Sidebar />
        </div>
        <Panels />
        <Agenda />
        <div className="flex w-[17px] shrink-0 flex-col items-center bg-[#cdcdcd]">
          <button className="flex h-[17px] w-full items-center justify-center bg-[#f0f0f0]" aria-label="Subir">
            <ChevronUp size={11} color="#505050" strokeWidth={3} />
          </button>
        </div>
      </main>
      <div className="flex h-[38px] shrink-0 items-center gap-3 bg-black">
        <Boat size={38} />
        <input aria-label="Buscar y ejecutar" placeholder="Escribe aquí para buscar y ejecutar" className={`h-[27px] w-[297px] border border-gray-500 bg-white pl-0.5 text-[15px] outline-none placeholder:text-[#6495ed] ${TAHOMA}`} />
      </div>
      <Taskbar />
      <MessageWindow />
    </div>
  );
}
